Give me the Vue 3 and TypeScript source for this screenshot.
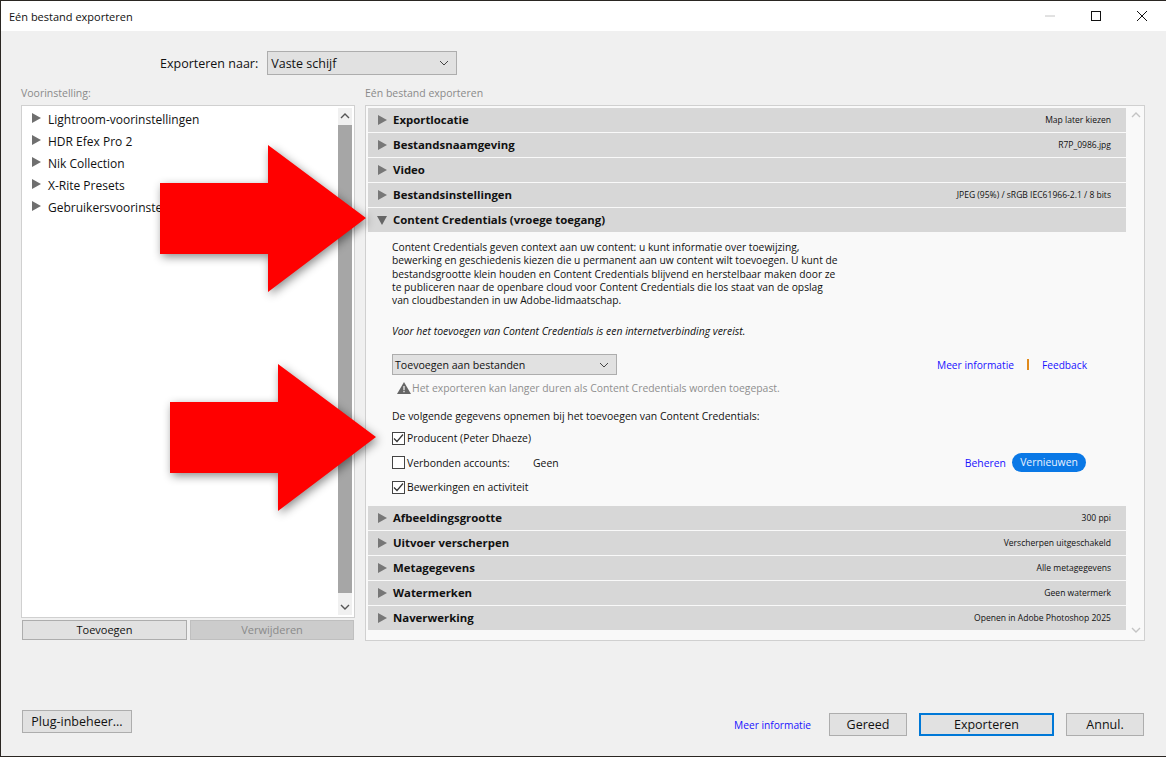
<script setup lang="ts">
const presets: string[] = ['Lightroom-voorinstellingen', 'HDR Efex Pro 2', 'Nik Collection', 'X-Rite Presets', 'Gebruikersvoorinstellingen']
const topRows = [
  { title: 'Exportlocatie', value: 'Map later kiezen' },
  { title: 'Bestandsnaamgeving', value: 'R7P_0986.jpg' },
  { title: 'Video', value: '' },
  { title: 'Bestandsinstellingen', value: 'JPEG (95%) / sRGB IEC61966-2.1 / 8 bits' },
]
const bottomRows = [
  { title: 'Afbeeldingsgrootte', value: '300 ppi' },
  { title: 'Uitvoer verscherpen', value: 'Verscherpen uitgeschakeld' },
  { title: 'Metagegevens', value: 'Alle metagegevens' },
  { title: 'Watermerken', value: 'Geen watermerk' },
  { title: 'Naverwerking', value: 'Openen in Adobe Photoshop 2025' },
]
const intro: string[] = [
  'Content Credentials geven context aan uw content: u kunt informatie over toewijzing,',
  'bewerking en geschiedenis kiezen die u permanent aan uw content wilt toevoegen. U kunt de',
  'bestandsgrootte klein houden en Content Credentials blijvend en herstelbaar maken door ze',
  'te publiceren naar de openbare cloud voor Content Credentials die los staat van de opslag',
  'van cloudbestanden in uw Adobe-lidmaatschap.',
]
</script>

<template>
  <div class="window">
    <header class="titlebar">
      <span class="title">Eén bestand exporteren</span>
      <div class="controls">
        <svg width="12" height="12" viewBox="0 0 12 12"><path d="M1 6h10" stroke="#c4c4c4" fill="none" /></svg>
        <svg width="12" height="12" viewBox="0 0 12 12"><rect x="1.5" y="1.5" width="9" height="9" stroke="#111" fill="none" /></svg>
        <svg width="12" height="12" viewBox="0 0 12 12"><path d="M1 1l10 10M11 1L1 11" stroke="#111" fill="none" /></svg>
      </div>
    </header>

    <main class="body">
      <div class="target">
        <span class="target-label">Exporteren naar:</span>
        <div class="select target-select">
          <span>Vaste schijf</span>
          <svg class="chev" width="10" height="6" viewBox="0 0 10 6"><path d="M1 1l4 4 4-4" stroke="#444" fill="none" /></svg>
        </div>
      </div>

      <div class="columns">
        <section class="left">
          <div class="caption">Voorinstelling:</div>
          <div class="list">
            <ul class="presets">
              <li v-for="p in presets" :key="p">
                <svg class="tri-small" width="9" height="10" viewBox="0 0 9 10"><path d="M0 0l9 5-9 5z" fill="#6f6f6f" /></svg>
                <span>{{ p }}</span>
              </li>
            </ul>
            <div class="scroll left-scroll">
              <svg width="10" height="6" viewBox="0 0 10 6"><path d="M1 5l4-4 4 4" stroke="#555" stroke-width="1.4" fill="none" /></svg>
              <div class="thumb"></div>
              <svg width="10" height="6" viewBox="0 0 10 6"><path d="M1 1l4 4 4-4" stroke="#555" stroke-width="1.4" fill="none" /></svg>
            </div>
          </div>
          <div class="list-buttons">
            <button class="btn">Toevoegen</button>
            <button class="btn disabled">Verwijderen</button>
          </div>
        </section>

        <section class="right">
          <div class="caption">Eén bestand exporteren</div>
          <div class="panel">
            <div class="rows">
              <div v-for="r in topRows" :key="r.title" class="row">
                <svg class="tri" width="9" height="10" viewBox="0 0 9 10"><path d="M0 0l9 5-9 5z" fill="#777" /></svg>
                <b>{{ r.title }}</b>
                <span class="value">{{ r.value }}</span>
              </div>
              <div class="row open">
                <svg class="tri" width="10" height="9" viewBox="0 0 10 9"><path d="M0 0h10L5 9z" fill="#666" /></svg>
                <b>Content Credentials (vroege toegang)</b>
              </div>

              <div class="content">
                <p class="intro"><span v-for="l in intro" :key="l">{{ l }}</span></p>
                <p class="note">Voor het toevoegen van Content Credentials is een internetverbinding vereist.</p>
                <div class="mode-row">
                  <div class="select mode-select">
                    <span>Toevoegen aan bestanden</span>
                    <svg class="chev" width="10" height="6" viewBox="0 0 10 6"><path d="M1 1l4 4 4-4" stroke="#444" fill="none" /></svg>
                  </div>
                  <div class="links">
                    <a>Meer informatie</a>
                    <i class="sep"></i>
                    <a>Feedback</a>
                  </div>
                </div>
                <div class="warning">
                  <svg width="14" height="12" viewBox="0 0 14 12"><path d="M7 0l7 12H0z" fill="#666" /><path d="M6.4 4h1.2v4.2H6.4zM6.4 9h1.2v1.3H6.4z" fill="#f8f8f8" /></svg>
                  <span>Het exporteren kan langer duren als Content Credentials worden toegepast.</span>
                </div>
                <div class="include">De volgende gegevens opnemen bij het toevoegen van Content Credentials:</div>
                <label class="check c1">
                  <span class="box"><svg width="11" height="9" viewBox="0 0 11 9"><path d="M1 4.5l3 3 6-7" stroke="#333" stroke-width="1.2" fill="none" /></svg></span>
                  Producent (Peter Dhaeze)
                </label>
                <div class="check c2">
                  <span class="box"></span>
                  <span class="acc-label">Verbonden accounts:</span>
                  <span class="acc-val">Geen</span>
                  <a class="manage">Beheren</a>
                  <span class="pill">Vernieuwen</span>
                </div>
                <label class="check c3">
                  <span class="box"><svg width="11" height="9" viewBox="0 0 11 9"><path d="M1 4.5l3 3 6-7" stroke="#333" stroke-width="1.2" fill="none" /></svg></span>
                  Bewerkingen en activiteit
                </label>
              </div>

              <div v-for="r in bottomRows" :key="r.title" class="row">
                <svg class="tri" width="9" height="10" viewBox="0 0 9 10"><path d="M0 0l9 5-9 5z" fill="#777" /></svg>
                <b>{{ r.title }}</b>
                <span class="value">{{ r.value }}</span>
              </div>
            </div>
            <div class="scroll right-scroll">
              <svg width="10" height="6" viewBox="0 0 10 6"><path d="M1 5l4-4 4 4" stroke="#c4c4c4" stroke-width="1.4" fill="none" /></svg>
              <svg width="10" height="6" viewBox="0 0 10 6"><path d="M1 1l4 4 4-4" stroke="#c4c4c4" stroke-width="1.4" fill="none" /></svg>
            </div>
          </div>
        </section>
      </div>

      <footer class="footer">
        <button class="btn plug">Plug-inbeheer...</button>
        <div class="actions">
          <a class="more">Meer informatie</a>
          <button class="btn done">Gereed</button>
          <button class="btn export">Exporteren</button>
          <button class="btn cancel">Annul.</button>
        </div>
      </footer>
    </main>

    <svg class="arrow a1" width="230" height="170" viewBox="0 0 230 170"><path d="M8 43H116V5L214 78 116 152V114H8z" fill="#ff0000" /></svg>
    <svg class="arrow a2" width="230" height="170" viewBox="0 0 230 170"><path d="M8 42H116V4L214 77 116 151V113H8z" fill="#ff0000" /></svg>
  </div>
</template>

<style>
html, body { margin: 0; background: #2a2622; overflow: hidden; }
</style>

<style scoped>
.window {
  position: relative;
  box-sizing: border-box;
  width: 1165px;
  height: 755px;
  margin-top: 1px;
  margin-left: 1px;
  display: flex;
  flex-direction: column;
  background: #f0f0f0;
  color: #111;
  font-family: "Open Sans", "Noto Sans", sans-serif;
  font-size: 12px;
  overflow: hidden;
}
.titlebar {
  height: 30px;
  flex: none;
  display: flex;
  align-items: center;
  justify-content: space-between;
  background: #fff;
  padding-left: 8px;
  font-size: 11px;
}
.controls { display: flex; gap: 34px; padding-right: 18px; }
.body { flex: 1; display: flex; flex-direction: column; padding: 20px 21px 0 20px; }
.target { display: flex; align-items: center; height: 24px; padding-left: 139px; gap: 9px; }
.target-label { font-size: 12.5px; }
.select {
  box-sizing: border-box;
  display: flex;
  align-items: center;
  justify-content: space-between;
  background: #e1e1e1;
  border: 1px solid #adadad;
  padding: 0 7px 0 3px;
}
.target-select { width: 190px; height: 24px; font-size: 12.5px; }
.chev { flex: none; }
.columns { display: flex; gap: 10px; margin-top: 11px; }
.caption { color: #8a8a8a; font-size: 10.5px; height: 19px; line-height: 15px; }
.left { width: 334px; flex: none; }
.right { width: 780px; flex: none; }
.list {
  box-sizing: border-box;
  height: 513px;
  display: flex;
  background: #fff;
  border: 1px solid #d0d0d0;
  padding: 2px;
}
.presets { flex: 1; margin: 0; padding: 0 0 0 8px; list-style: none; font-size: 12px; }
.presets li { height: 22px; display: flex; align-items: center; gap: 7px; }
.tri-small { margin-bottom: 3px; }
.scroll { display: flex; flex-direction: column; align-items: center; justify-content: space-between; box-sizing: border-box; padding: 5px 0; }
.left-scroll { width: 14px; background: #f0f0f0; }
.thumb { flex: 1; width: 100%; background: #a6a6a6; margin: 6px 0 11px; }
.list-buttons { display: flex; gap: 3px; margin-top: 2px; padding-left: 1px; }
.btn {
  box-sizing: border-box;
  background: #e1e1e1;
  border: 1px solid #adadad;
  font: inherit;
  color: #111;
  padding: 0;
}
.list-buttons .btn { width: 165px; height: 20px; font-size: 11px; padding-bottom: 1px; }
.list-buttons .disabled { width: 164px; background: #cccccc; border-color: #bfbfbf; color: #8a8a8a; }
.panel {
  box-sizing: border-box;
  height: 536px;
  display: flex;
  gap: 2px;
  background: #f9f9f9;
  border: 1px solid #d0d0d0;
  padding: 2px 1px 2px 2px;
}
.rows { width: 758px; flex: none; display: flex; flex-direction: column; }
.right-scroll { width: 15px; padding: 4px 0 5px; }
.row {
  box-sizing: border-box;
  flex: none;
  height: 24px;
  margin-bottom: 1px;
  display: flex;
  align-items: center;
  background: #d7d7d7;
  padding: 0 15px 0 10px;
  font-size: 11px;
}
.row b { margin-left: 6px; margin-bottom: 2px; font-weight: 700; font-size: 11.4px; }
.row .value { margin-left: auto; margin-bottom: 1px; font-size: 8.55px; }
.row.open { margin-bottom: 0; padding-left: 9px; }
.content { box-sizing: border-box; flex: none; height: 274px; padding: 9px 0 0 24px; font-size: 10.4px; }
.intro { margin: 0; line-height: 13.25px; font-size: 10.28px; }
.intro span { display: block; white-space: nowrap; }
.note { margin: 17px 0 0; font-style: italic; line-height: 14px; font-size: 10.45px; }
.mode-row { display: flex; align-items: center; justify-content: space-between; margin-top: 16px; padding-right: 39px; }
.mode-select { width: 225px; height: 21px; font-size: 10.6px; padding-left: 2px; }
.links { display: flex; align-items: center; }
a { color: #1a12ff; }
.links a { font-size: 10.2px; }
.sep { width: 2px; height: 11px; background: #e08a1c; margin: 0 13px; }
.warning { display: flex; align-items: center; gap: 1px; padding-left: 5px; margin-top: 4px; height: 18px; color: #8f8f8f; font-size: 10.4px; }
.include { margin-top: 11px; height: 16px; line-height: 16px; font-size: 10.45px; }
.check { display: flex; align-items: center; gap: 2px; font-size: 10.4px; }
.c1 { height: 22px; margin-top: 3px; }
.c2 { height: 27px; padding-right: 40px; }
.c3 { height: 22px; }
.box {
  box-sizing: border-box;
  width: 13px;
  height: 13px;
  display: flex;
  align-items: center;
  justify-content: center;
  background: #fff;
  border: 1px solid #444;
}
.acc-label { width: 124px; }
.manage { margin-left: auto; margin-right: 4px; }
.pill {
  box-sizing: border-box;
  width: 74px;
  height: 19px;
  border-radius: 10px;
  background: #0a78e6;
  color: #e8f2ff;
  text-align: center;
  line-height: 18px;
  font-size: 10.4px;
}
.footer { display: flex; align-items: flex-start; justify-content: space-between; margin-top: 69px; padding: 0 1px 0 1px; }
.plug { width: 110px; height: 23px; font-size: 12.5px; }
.actions { display: flex; align-items: center; margin-top: 3px; }
.more { font-size: 10.2px; margin-right: 18px; }
.actions .btn { height: 23px; font-size: 12.5px; }
.done { width: 78px; margin-right: 12px; }
.export { width: 135px; margin-right: 12px; border: 2px solid #0078d7 !important; }
.cancel { width: 78px; }
.arrow { position: absolute; filter: drop-shadow(2px 3px 5px rgba(0, 0, 0, 0.45)); }
.a1 { left: 151px; top: 139px; }
.a2 { left: 161px; top: 359px; }
</style>
